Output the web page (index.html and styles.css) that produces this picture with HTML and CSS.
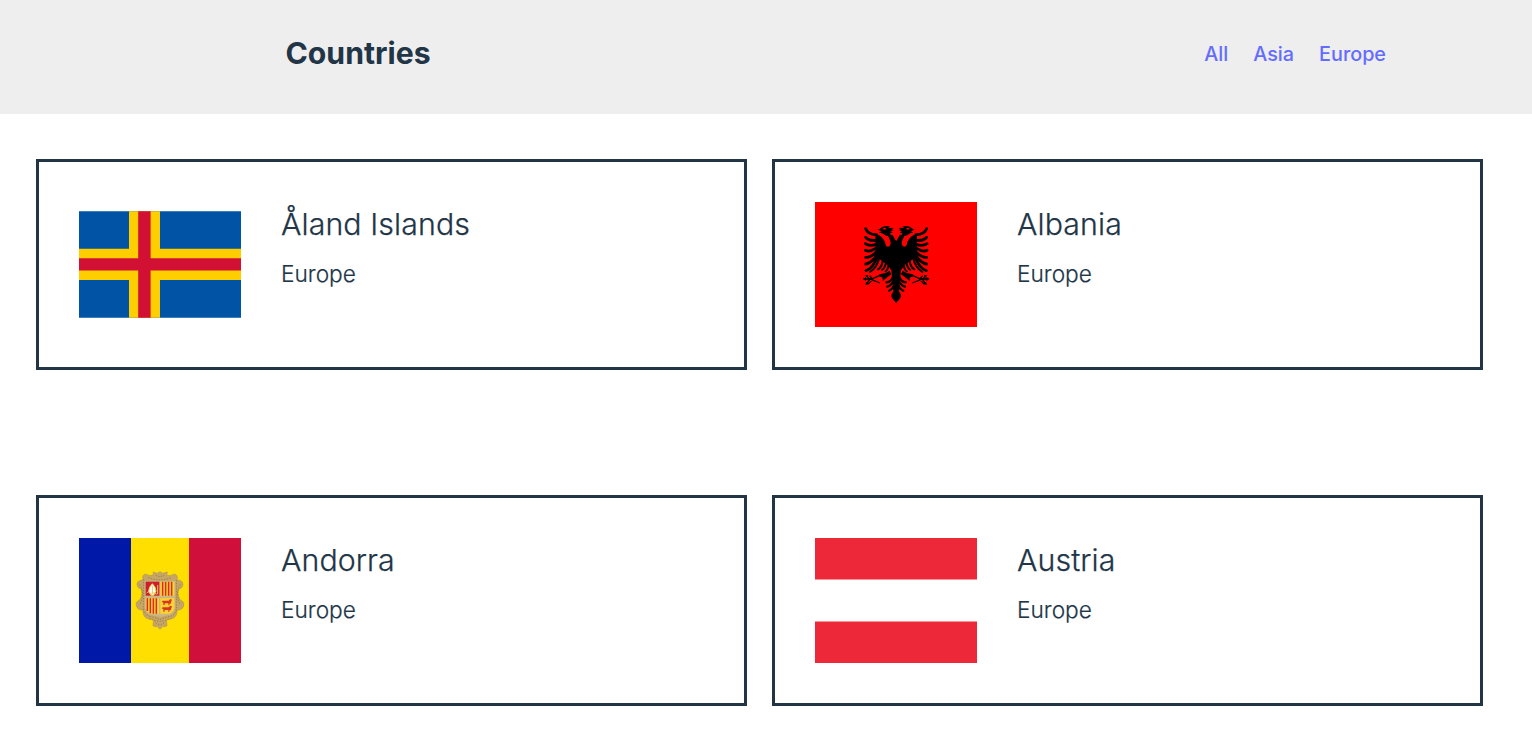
FILE: index.html
```html
<!DOCTYPE html>
<html lang="en">
<head>
<meta charset="utf-8">
<title>Countries</title>
<link rel="stylesheet" href="styles.css">
</head>
<body>
<header class="header">
  <h1 class="title">Countries</h1>
  <nav class="nav"><a class="link" href="#">All</a><a class="link" href="#">Asia</a><a class="link" href="#">Europe</a></nav>
</header>
<main class="grid">
  <article class="card">
    <svg class="flag" viewBox="0 0 162 125">
      <path fill="#0053a5" d="M0 9.3h162v106.4H0z"/>
      <path fill="#ffce00" d="M0 46.8h162v31.3H0zM50 9.3h31v106.4H50z"/>
      <path fill="#d21034" d="M0 56.2h162v12.4H0zM59.2 9.3h12.4v106.4H59.2z"/>
    </svg>
    <div class="info"><h2 class="name">Åland Islands</h2><p class="region">Europe</p></div>
  </article>
  <article class="card">
    <svg class="flag" viewBox="0 0 486 375">
      <path fill="red" d="M0 0h486v375H0z"/>
      <defs>
        <g id="wing">
          <path d="M140 81Q133 70 128 60Q118 57 115 63Q116 69 120 76Q124 86 119 93Q112 98 107 91Q106 79 98 70Q88 58 76 58V123L96 138L113 150L124 166L127 192L129 226L140 230Z"/>
          <path d="M78 41Q85 47 91 40Q101 31 119 34L115 38L132 39L124 43L131 45L121 49L128 52L119 56L126 63L115 64L105 61L97 55L87 53L94 49Z"/>
          <path fill="red" d="M97 41l7-3 6 3-7 3z"/>
          <path fill="none" stroke="#000" stroke-width="8.5" stroke-linecap="round" d="M47 41Q53 59 79 59M47 67Q55 78 79 76M46 86Q58 95 79 88M46 106Q59 113 80 98M47 127Q62 129 82 108M47 147Q65 145 83 116M48 167Q68 161 84 122"/>
          <path fill="none" stroke="#000" stroke-width="6" stroke-linecap="round" d="M60 171Q81 157 88 128M84 163Q97 155 98 136M96 165Q106 158 108 141M107 169Q116 162 115 146"/>
          <path d="M88 178L107 174L119 167L124 178L109 189L98 198L98 188L87 184Z"/>
          <path fill="none" stroke="#000" stroke-width="4" d="M41 192H65L90 181M48 182L60 192L48 209M55 190L90 204M54 208L68 193L59 182"/>
          <path d="M38 192l10-6v12zM46 180l9 0-3 8zM47 211l1-10 8 5z"/>
          <path fill="none" stroke="#000" stroke-width="6.5" stroke-linecap="round" d="M109 202Q124 202 130 182M112 215Q126 212 133 191M117 227Q129 223 136 201"/>
          <path d="M140 212Q132 220 128 233Q119 242 130 254L140 265Z"/>
        </g>
      </defs>
      <g transform="translate(105 39)">
        <use href="#wing"/>
        <use href="#wing" transform="translate(277 0) scale(-1 1)"/>
      </g>
    </svg>
    <div class="info"><h2 class="name">Albania</h2><p class="region">Europe</p></div>
  </article>
  <article class="card">
    <svg class="flag" viewBox="0 0 486 375">
      <path fill="#0018a8" d="M0 0h156v375H0z"/>
      <path fill="#fedf00" d="M156 0h174v375H156z"/>
      <path fill="#d0103a" d="M330 0h156v375H330z"/>
      <g transform="translate(165 90)">
        <path fill="#c5a665" stroke="#ab8b55" stroke-width="1.5" d="M59 19L57 12L70 16L78 11L86 16L100 12L98 20Q106 25 112 22Q124 15 129 23Q132 30 128 36Q139 35 145 42Q150 51 143 59L134 64Q130 75 134 87L139 96Q149 99 150 109Q149 121 139 125L129 127Q130 144 117 151Q108 155 97 154L99 173Q91 178 87 175L78 184L69 175Q65 178 57 173L59 154Q47 155 38 151Q26 144 27 127L17 125Q7 121 6 109Q7 99 17 96L22 87Q26 75 22 64L13 59Q6 51 11 42Q17 35 28 36Q24 30 27 23Q32 15 44 22Q50 25 59 19Z"/>
        <path fill="none" stroke="#92764d" stroke-width="2.5" stroke-dasharray="4 4" d="M29 34V126Q34 145 56 147L78 154L100 147Q122 145 127 126V34M43 29Q78 42 113 29M46 152Q78 167 110 152M17 49Q34 76 17 111M139 49Q122 76 139 111M65 22Q78 29 91 22M65 164Q78 175 91 164"/>
        <path fill="#cbb781" d="M32 38H124V119Q120 140 101 142L78 147L55 142Q36 140 32 119Z"/>
        <path fill="#d01c2c" d="M35 41h41v42H35z"/>
        <path fill="#ffd22e" d="M79 41h42v42H79zM35 91h40v46H53Q36 134 35 120zM79 91h42v29Q119 134 103 137H79z"/>
        <path stroke="#d72b30" stroke-width="4.5" d="M86 41v42M95 41v42M104 41v42M113 41v42M40 91v38M49 91v45M58 91v46M67 91v46"/>
        <path fill="#fff" stroke="#f0ca36" stroke-width="3" d="M55 47Q66 57 66 70L59 82H51L44 70Q44 57 55 47Z"/>
        <path fill="none" stroke="#edc45b" stroke-width="3" d="M38 75q5-7 9 0t7 2 8-1 9 1M55 54v23M71 51v27"/>
        <path fill="#d53625" d="M86 98h18l5-5 5 2-2 5-2 7h-4v5h-3v-6H92v5h-4v-7l-5-3zM86 118h18l5-5 5 2-2 5-2 7h-4v5h-3v-6H92v5h-4v-7l-5-3z"/>
      </g>
    </svg>
    <div class="info"><h2 class="name">Andorra</h2><p class="region">Europe</p></div>
  </article>
  <article class="card">
    <svg class="flag" viewBox="0 0 162 125">
      <path fill="#fff" d="M0 0h162v125H0z"/>
      <path fill="#ed2939" d="M0 0h162v41.6H0zM0 83.4h162V125H0z"/>
    </svg>
    <div class="info"><h2 class="name">Austria</h2><p class="region">Europe</p></div>
  </article>
</main>
</body>
</html>
```
FILE: styles.css
```css
* { box-sizing: border-box; }
body {
  margin: 0;
  background: #fff;
  color: #213547;
  font-family: Inter, "Liberation Sans", sans-serif;
}
.header {
  display: flex;
  justify-content: space-between;
  align-items: center;
  height: 114px;
  padding: 0 146px 6px 285.5px;
  background: #eee;
}
.title { margin: 0; padding-bottom: 2px; font-size: 30.2px; font-weight: 700; line-height: 40px; }
.nav { display: flex; gap: 25px; }
.link { color: #646cff; font-size: 19.8px; font-weight: 500; line-height: 30px; text-decoration: none; }
.grid {
  display: grid;
  grid-template-columns: 711px 711px;
  gap: 125px 25px;
  padding: 45px 36px 0;
}
.card {
  display: flex;
  gap: 40px;
  height: 211px;
  padding: 40px;
  border: 3px solid #213547;
}
.flag { display: block; width: 162px; height: 125px; }
.info { padding-top: 2px; }
.name {
  margin: 0 0 12px;
  font-size: 30.3px;
  font-weight: 300;
  line-height: 40px;
  letter-spacing: 0.1px;
  -webkit-text-stroke: 0.25px #213547;
}
.region {
  margin: 0;
  font-size: 22.7px;
  font-weight: 300;
  line-height: 36px;
  -webkit-text-stroke: 0.2px #213547;
}
```
